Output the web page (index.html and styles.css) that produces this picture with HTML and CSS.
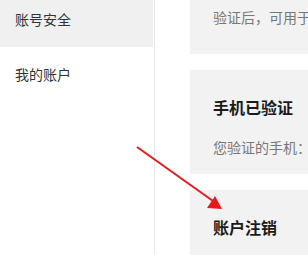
FILE: index.html
```
<!DOCTYPE html>
<html lang="zh-CN">
<head>
    <meta charset="UTF-8">
    <meta name="viewport" content="width=device-width, initial-scale=1.0">
    <title>账号安全</title>
    <link rel="stylesheet" href="styles.css">
</head>
<body>

    <div class="layout">
        <!-- Sidebar -->
        <div class="sidebar">
            <div class="nav-item active">账号安全</div>
            <div class="nav-item">我的账户</div>
        </div>

        <!-- Main content -->
        <div class="main">
            <div class="card card-top">
                <p class="card-text">验证后，可用于</p>
            </div>

            <div class="card">
                <h3 class="card-title">手机已验证</h3>
                <p class="card-text">您验证的手机：</p>
            </div>

            <div class="card">
                <h3 class="card-title">账户注销</h3>
            </div>
        </div>
    </div>

    <!-- Red annotation arrow -->
    <svg class="arrow" width="308" height="255" viewBox="0 0 308 255">
        <line x1="137" y1="147" x2="213" y2="201" stroke="#e8191c" stroke-width="2"/>
        <polygon points="222,209 207,208 215,196" fill="#e8191c"/>
    </svg>

</body>
</html>
```

FILE: styles.css
```
body {
    margin: 0;
    font-family: "Noto Sans CJK SC", "Liberation Sans", sans-serif;
    background: #fff;
    overflow: hidden;
    height: 255px;
    position: relative;
}

.layout {
    display: flex;
    height: 263px;
    margin-top: -8px;
    overflow: hidden;
}

/* Sidebar */
.sidebar {
    width: 154px;
    border-right: 1px solid #e6e6e6;
    flex-shrink: 0;
}

.nav-item {
    height: 55px;
    line-height: 55px;
    padding-left: 15px;
    margin-right: 1px;
    font-size: 14px;
    color: #333;
}

.nav-item.active {
    background: #f0f0f0;
}

/* Cards */
.main {
    flex: 1;
    min-width: 0;
    padding-left: 35px;
    white-space: nowrap;
    overflow: hidden;
}

.card {
    background: #f2f2f2;
    padding: 26px 23px 17px;
    margin-bottom: 16px;
}

.card-top {
    padding-top: 15px;
    padding-bottom: 27px;
}

.card-title {
    margin: 0 0 19px;
    font-size: 16px;
    line-height: 22px;
    font-weight: bold;
    color: #1a1a1a;
}

.card-text {
    margin: 0;
    font-size: 14px;
    line-height: 20px;
    color: #777;
}

/* Annotation */
.arrow {
    position: absolute;
    left: 0;
    top: 0;
}
```
